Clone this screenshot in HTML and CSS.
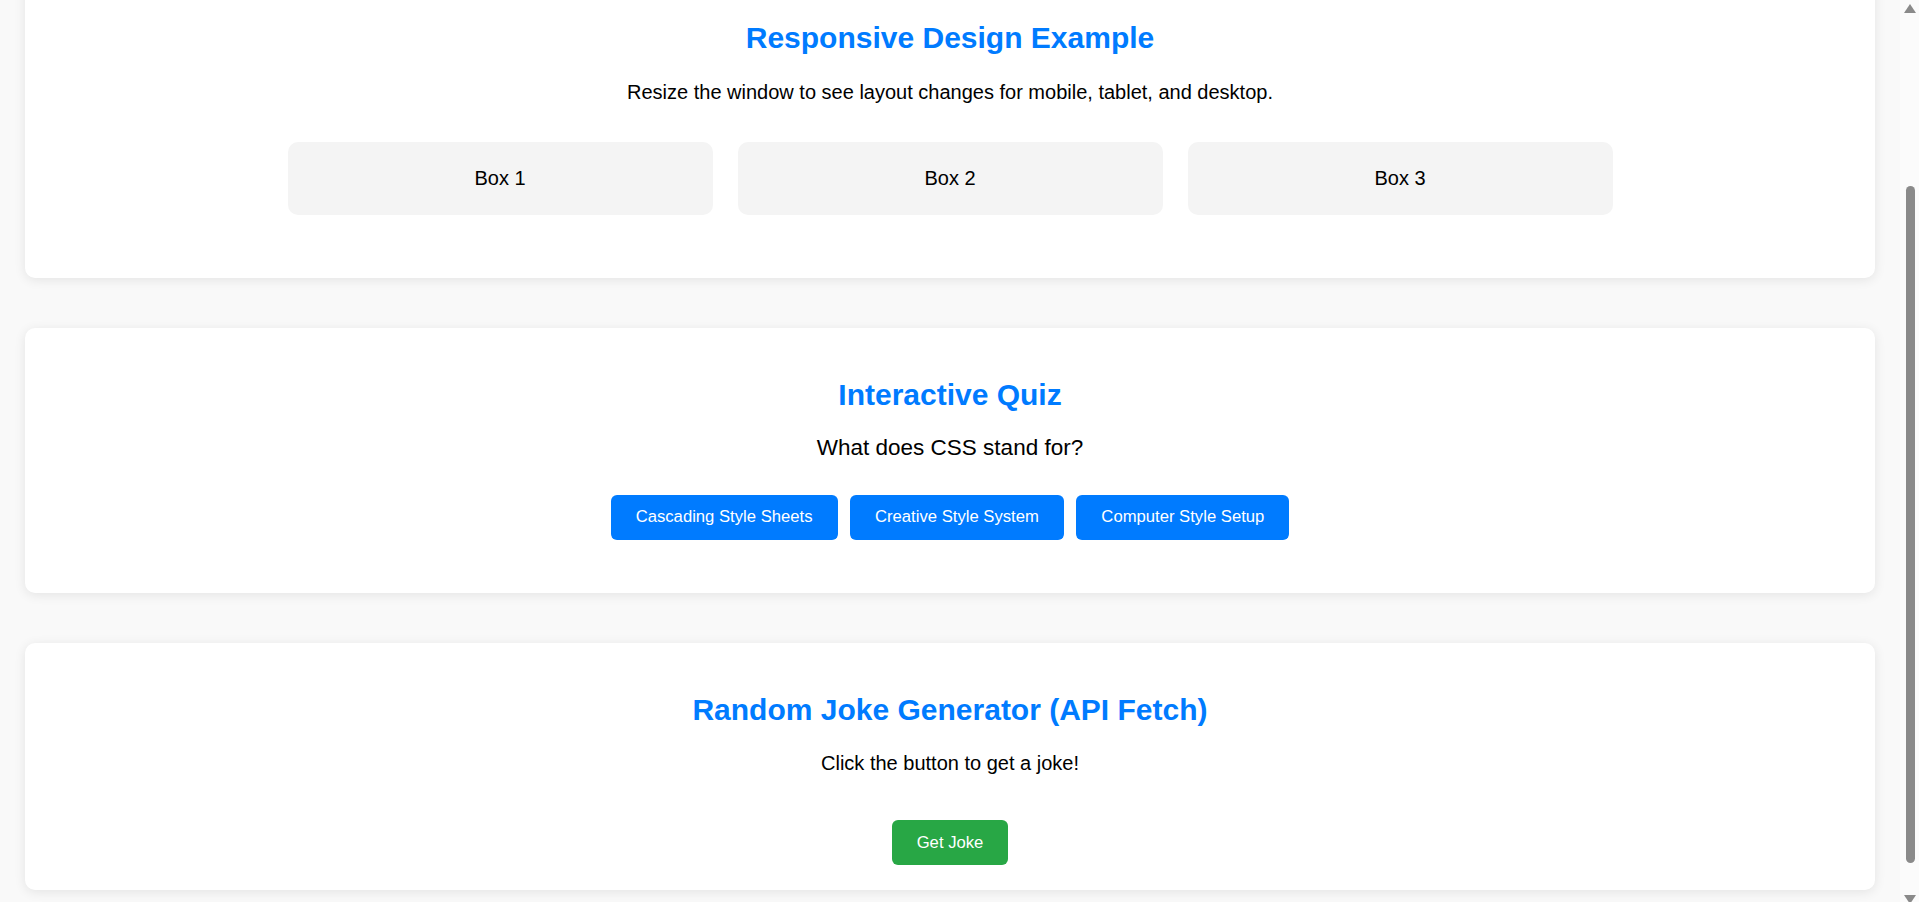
FILE: index.html
```html
<!DOCTYPE html>
<html lang="en">
<head>
<meta charset="utf-8">
<title>Web Features Demo</title>
<link rel="stylesheet" href="styles.css">
</head>
<body>
<main class="page">
  <section class="card">
    <h2 class="title">Responsive Design Example</h2>
    <p class="lead">Resize the window to see layout changes for mobile, tablet, and desktop.</p>
    <div class="grid">
      <div class="box">Box 1</div>
      <div class="box">Box 2</div>
      <div class="box">Box 3</div>
    </div>
  </section>

  <section class="card card-quiz">
    <h2 class="title">Interactive Quiz</h2>
    <p class="question">What does CSS stand for?</p>
    <div class="options">
      <button class="btn btn-blue">Cascading Style Sheets</button>
      <button class="btn btn-blue">Creative Style System</button>
      <button class="btn btn-blue">Computer Style Setup</button>
    </div>
  </section>

  <section class="card card-joke">
    <h2 class="title">Random Joke Generator (API Fetch)</h2>
    <p class="lead lead-joke">Click the button to get a joke!</p>
    <button class="btn btn-green joke-btn">Get Joke</button>
  </section>
</main>

<div class="scrollbar" aria-hidden="true">
  <span class="sb-arrow sb-up"></span>
  <span class="sb-thumb"></span>
  <span class="sb-arrow sb-down"></span>
</div>
<script src="script.js"></script>
</body>
</html>
```

FILE: styles.css
```css
html {
  background: #f9f9f9;
  scrollbar-width: none;
}

html::-webkit-scrollbar {
  display: none;
}

body {
  margin: 0;
  padding: 197px 44px 11.5px 25px;
  background: #f9f9f9;
  color: #000;
  font-family: "Liberation Sans", Arial, Helvetica, sans-serif;
}

.page {
  display: flex;
  flex-direction: column;
  gap: 50px;
}

.card {
  display: flex;
  flex-direction: column;
  align-items: center;
  text-align: center;
  background: #fff;
  border-radius: 10px;
  padding: 25px;
  box-shadow: 0 2px 12px rgba(0, 0, 0, 0.09);
}

.title {
  margin: 25px 0 0;
  font-size: 30px;
  line-height: 34.5px;
  font-weight: bold;
  color: #007bff;
}

.lead {
  margin: 25px 0 0;
  font-size: 20px;
  line-height: 23px;
}

.lead-joke {
  margin-top: 24px;
}

.grid {
  width: 1325px;
  margin: 38px 0 38px;
  display: grid;
  grid-template-columns: repeat(3, 1fr);
  gap: 25px;
}

.box {
  background: #f4f4f4;
  border-radius: 10px;
  padding: 25px;
  font-size: 20px;
  line-height: 23px;
}

.question {
  margin: 23px 0 0;
  font-size: 22.5px;
  line-height: 26px;
}

.options {
  display: flex;
  justify-content: center;
  gap: 12.5px;
  margin: 33.5px 0 28.7px;
}

.btn {
  border: none;
  border-radius: 6px;
  padding: 12.5px 25px;
  font-family: "Liberation Sans", Arial, Helvetica, sans-serif;
  font-size: 16.67px;
  line-height: 20px;
  color: #fff;
  cursor: pointer;
}

.btn-blue {
  background: #007bff;
}

.btn-green {
  background: #28a745;
}

.joke-btn {
  margin-top: 45.8px;
}

/* imitation of the browser's vertical scrollbar, drawn over the right edge */
.scrollbar {
  position: fixed;
  top: 0;
  right: 0;
  width: 19px;
  height: 100vh;
  background: #fbfbfb;
}

.sb-arrow {
  position: absolute;
  left: 4px;
  width: 0;
  height: 0;
  border-left: 6.5px solid transparent;
  border-right: 6.5px solid transparent;
}

.sb-up {
  top: 4px;
  border-bottom: 9px solid #8a8a8a;
}

.sb-down {
  top: 895px;
  border-top: 9px solid #8a8a8a;
}

.sb-thumb {
  position: absolute;
  left: 6px;
  top: 186px;
  width: 9px;
  height: 677px;
  border-radius: 5px;
  background: #8a8a8a;
}
```

FILE: script.js
```js
function placeView() {
  window.scrollTo(0, document.documentElement.scrollHeight);
}
placeView();
window.addEventListener('load', placeView);
```
